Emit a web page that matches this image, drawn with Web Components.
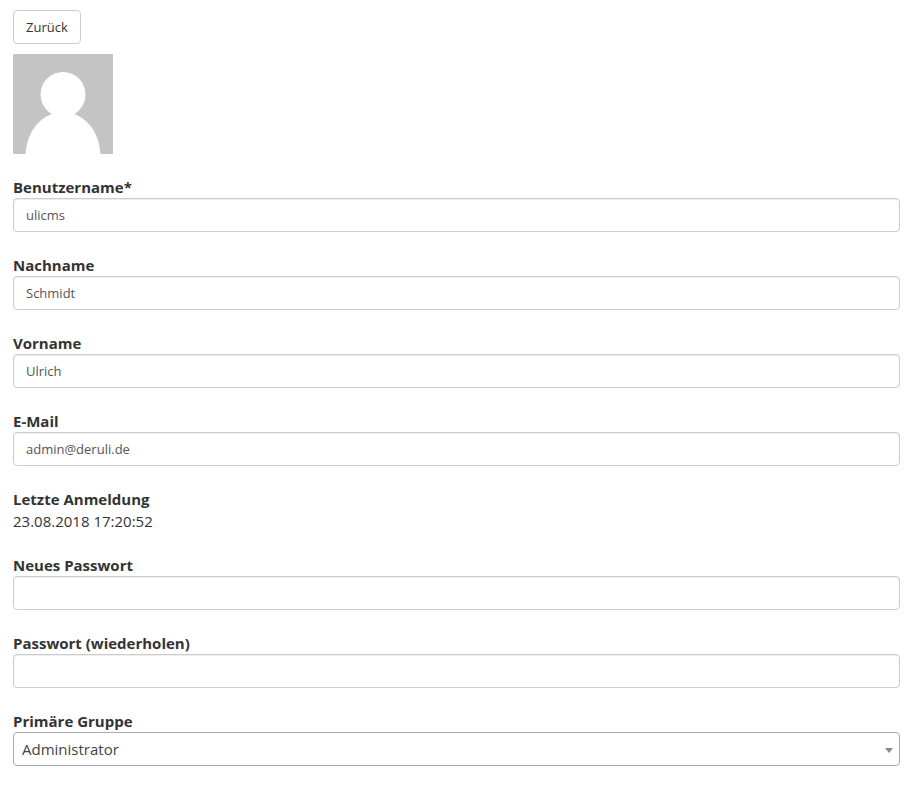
<!DOCTYPE html>
<html lang="de">
<head>
<meta charset="utf-8">
<meta name="viewport" content="width=device-width, initial-scale=1">
<title>Benutzer bearbeiten</title>
<style>
    body {
        margin: 0;
        padding: 10px 12px 20px 13px;
        background: #fff;
        color: #333;
        font-family: "Segoe UI", "Open Sans", sans-serif;
        font-size: 15px;
        line-height: 22px;
    }
</style>
</head>
<body>
<user-form>
    <back-button slot="actions">Zurück</back-button>
    <user-avatar slot="avatar"></user-avatar>
    <text-field label="Benutzername*" name="username" value="ulicms"></text-field>
    <text-field label="Nachname" name="lastname" value="Schmidt"></text-field>
    <text-field label="Vorname" name="firstname" value="Ulrich"></text-field>
    <text-field label="E-Mail" name="email" type="email" value="admin@deruli.de"></text-field>
    <static-field label="Letzte Anmeldung">23.08.2018 17:20:52</static-field>
    <text-field label="Neues Passwort" name="password" type="password"></text-field>
    <text-field label="Passwort (wiederholen)" name="password_repeat" type="password"></text-field>
    <select-field label="Primäre Gruppe" name="group" options="Administrator"></select-field>
</user-form>

<script>
class UserForm extends HTMLElement {

    constructor() {
        super();
        this.shadowDOM = this.attachShadow({ mode: "open" });
        this.shadowDOM.innerHTML = `
           <style>
               :host {
                   display: block;
               }

               .head {
                   display: flex;
                   flex-direction: column;
                   align-items: flex-start;
                   gap: 10px;
                   margin-bottom: 22px;
               }

               .fields {
                   display: flex;
                   flex-direction: column;
                   gap: 22px;
               }
           </style>
           <div class="head">
               <slot name="actions"></slot>
               <slot name="avatar"></slot>
           </div>
           <div class="fields"><slot></slot></div>`;
    }
}

class BackButton extends HTMLElement {

    constructor() {
        super();
        this.shadowDOM = this.attachShadow({ mode: "open" });
        this.shadowDOM.innerHTML = `
           <style>
               :host {
                   display: block;
               }

               button {
                   display: block;
                   box-sizing: border-box;
                   height: 34px;
                   padding: 0 12px;
                   border: 1px solid #ccc;
                   border-radius: 4px;
                   background: #fff;
                   color: #333;
                   font: inherit;
                   font-size: 13px;
                   line-height: 20px;
                   cursor: pointer;
               }

               button:hover {
                   background: #e6e6e6;
               }
           </style>
           <button type="button"><slot></slot></button>`;
    }
}

class UserAvatar extends HTMLElement {

    constructor() {
        super();
        this.shadowDOM = this.attachShadow({ mode: "open" });
        this.shadowDOM.innerHTML = `
           <style>
               :host {
                   display: block;
               }

               svg {
                   display: block;
               }
           </style>
           <svg width="100" height="100" viewBox="0 0 100 100" aria-hidden="true">
               <rect width="100" height="100" fill="#c4c4c4"/>
               <circle cx="50" cy="40.5" r="22.5" fill="#fff"/>
               <path d="M12.5 100C14 79 25 65 39 60H61C75 65 86 79 87.5 100Z" fill="#fff"/>
           </svg>`;
    }
}

class TextField extends HTMLElement {

    constructor() {
        super();
        this.shadowDOM = this.attachShadow({ mode: "open" });
    }

    connectedCallback() {
        this.render();
    }

    render() {
        const type = this.getAttribute("type") || "text";
        const value = this.getAttribute("value") || "";
        this.shadowDOM.innerHTML = `
           <style>
               :host {
                   display: block;
               }

               label {
                   display: block;
                   font-weight: bold;
               }

               input {
                   display: block;
                   box-sizing: border-box;
                   width: 100%;
                   height: 34px;
                   margin: 0;
                   padding: 6px 12px;
                   border: 1px solid #ccc;
                   border-radius: 4px;
                   background: #fff;
                   box-shadow: inset 0 1px 1px rgba(0, 0, 0, 0.075);
                   color: #555;
                   font: inherit;
                   font-size: 13px;
                   line-height: 20px;
               }

               input:focus {
                   border-color: #66afe9;
                   outline: 0;
               }
           </style>
           <label for="field">${this.getAttribute("label")}</label>
           <input id="field" type="${type}" name="${this.getAttribute("name")}" value="${value}">`;
    }
}

class StaticField extends HTMLElement {

    constructor() {
        super();
        this.shadowDOM = this.attachShadow({ mode: "open" });
    }

    connectedCallback() {
        this.shadowDOM.innerHTML = `
           <style>
               :host {
                   display: block;
               }

               strong {
                   display: block;
               }
           </style>
           <strong>${this.getAttribute("label")}</strong>
           <slot></slot>`;
    }
}

class SelectField extends HTMLElement {

    constructor() {
        super();
        this.shadowDOM = this.attachShadow({ mode: "open" });
    }

    connectedCallback() {
        this.render();
    }

    render() {
        const options = this.getAttribute("options").split(",");
        this.shadowDOM.innerHTML = `
           <style>
               :host {
                   display: block;
               }

               label {
                   display: block;
                   font-weight: bold;
               }

               .box {
                   display: grid;
                   align-items: center;
               }

               select, svg {
                   grid-area: 1 / 1;
               }

               select {
                   appearance: none;
                   box-sizing: border-box;
                   width: 100%;
                   height: 34px;
                   margin: 0;
                   padding: 0 28px 0 8px;
                   border: 1px solid #aaa;
                   border-radius: 4px;
                   background: #fff;
                   color: #444;
                   font: inherit;
               }

               svg {
                   justify-self: end;
                   margin: 2px 7px 0 0;
                   pointer-events: none;
               }
           </style>
           <label for="field">${this.getAttribute("label")}</label>
           <div class="box">
               <select id="field" name="${this.getAttribute("name")}">
                   ${options.map(option => `<option>${option}</option>`).join("")}
               </select>
               <svg width="8" height="5" viewBox="0 0 8 5" aria-hidden="true"><path d="M0 0H8L4 5Z" fill="#888"/></svg>
           </div>`;
    }
}

customElements.define("user-form", UserForm);
customElements.define("back-button", BackButton);
customElements.define("user-avatar", UserAvatar);
customElements.define("text-field", TextField);
customElements.define("static-field", StaticField);
customElements.define("select-field", SelectField);
</script>
</body>
</html>
